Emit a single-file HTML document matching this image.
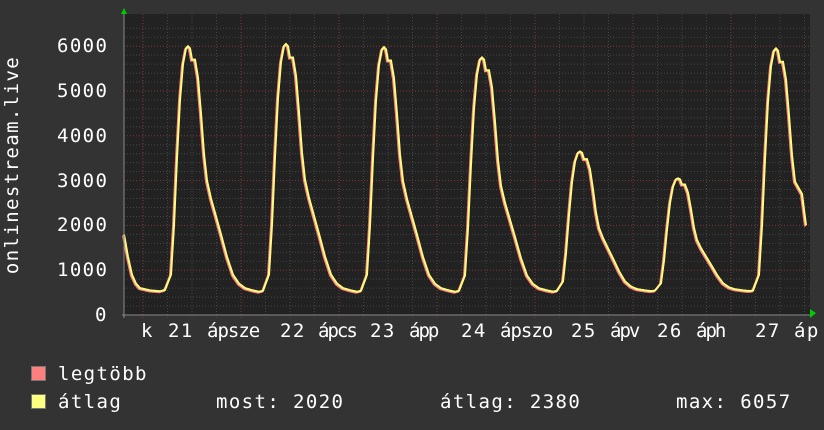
<!DOCTYPE html>
<html><head><meta charset="utf-8"><style>
html,body{margin:0;padding:0;background:#333;}
body{width:824px;height:430px;position:relative;overflow:hidden;font-family:"DejaVu Sans Mono","Liberation Mono",monospace;color:#fff;}
.t{position:absolute;font-size:19px;line-height:20px;white-space:pre;letter-spacing:1.4px;}
.x{position:absolute;font-size:19px;line-height:20px;white-space:pre;top:321px;letter-spacing:1.4px;}
.sq{position:absolute;width:13px;height:13px;border:1px solid #777;}
</style></head><body>
<svg id="g" width="824" height="430" style="position:absolute;left:0;top:0"></svg>
<div class="t" style="left:-108px;top:155px;transform:rotate(-90deg);transform-origin:center;width:240px;text-align:center;">onlinestream.live</div>
<div class="t" style="left:57px;top:36px">6000</div>
<div class="t" style="left:57px;top:81px">5000</div>
<div class="t" style="left:57px;top:126px">4000</div>
<div class="t" style="left:57px;top:171px">3000</div>
<div class="t" style="left:57px;top:215px">2000</div>
<div class="t" style="left:57px;top:260px">1000</div>
<div class="t" style="left:95px;top:305px">0</div>
<div class="x" style="left:141px">k</div>
<div class="x" style="left:168px">21</div>
<div class="x" style="left:207px;letter-spacing:-1px">ápsze</div>
<div class="x" style="left:280px">22</div>
<div class="x" style="left:318px;letter-spacing:-2px">ápcs</div>
<div class="x" style="left:370px">23</div>
<div class="x" style="left:409px;letter-spacing:-2px">ápp</div>
<div class="x" style="left:461px">24</div>
<div class="x" style="left:500px;letter-spacing:-1px">ápszo</div>
<div class="x" style="left:571px">25</div>
<div class="x" style="left:610px;letter-spacing:-2px">ápv</div>
<div class="x" style="left:657px">26</div>
<div class="x" style="left:696px;letter-spacing:-2px">áph</div>
<div class="x" style="left:755px">27</div>
<div class="x" style="left:794px">áp</div>
<div class="sq" style="left:31px;top:366px;background:#ff7f7f"></div>
<div class="sq" style="left:31px;top:394px;background:#ffff7f"></div>
<div class="t" style="left:58px;top:364px">legtöbb</div>
<div class="t" style="left:58px;top:392px">átlag</div>
<div class="t" style="left:216px;top:392px">most: 2020</div>
<div class="t" style="left:440px;top:392px">átlag: 2380</div>
<div class="t" style="left:676px;top:392px">max: 6057</div>
<script>
var s=document.getElementById('g'),h='';
h+='<rect x="124" y="14" width="686" height="301" fill="#222"/>';
for(var v=0;v<=6400;v+=200){var y=315-v*0.0448;var maj=v%1000==0;
h+='<line x1="124" x2="810" y1="'+y+'" y2="'+y+'" stroke="'+(maj?'#7a3a3a':'#444')+'" stroke-dasharray="1,2"/>';}
for(var x=143-98;x<810;x+=24.5){if(x<124)continue;var k=Math.round((x-143)/24.5);var maj=k%4==0;
h+='<line y1="14" y2="318" x1="'+x+'" x2="'+x+'" stroke="'+(maj?'#7a3a3a':'#444')+'" stroke-dasharray="1,2"/>';}
var peaks=[6000,6050,5980,5750,3650,3050,5950];
var shape=[[24,560],[28,900],[31,2000],[34,3500],[37,4800],[40,5600],[43,5950],[45,6000],[47,5950],[49,5700],[52,5700],[55,5300],[58,4500],[61,3600],[64,3000],[68,2600],[73,2200],[78,1800],[84,1300],[90,900],[96,700],[102,600],[110,550],[116,520],[120,540]];
var pts=[[124,1800],[128,1300],[132,900],[136,700],[140,600],[150,550],[160,530],[165,560]];
function yv(v){return 315-v*0.0448;}
for(var d=0;d<7;d++){var M=143+98*d,P=peaks[d];
for(var i=1;i<shape.length;i++){var o=shape[i][0],v=shape[i][1];
v=550+(v-550)*(P-550)/(6000-550);
if(M+o>798)break;pts.push([M+o,v]);}}
pts.push([802,2700],[806,2000]);
function path(dx,dy){return 'M'+pts.map(function(p){return (p[0]+dx)+','+(yv(p[1])+dy).toFixed(1)}).join(' L');}
h+='<path d="'+path(-1,1)+'" fill="none" stroke="#ff7f7f" stroke-width="2"/>';
h+='<path d="'+path(0,0)+'" fill="none" stroke="#ffff7f" stroke-width="2"/>';
h+='<path d="M122 315 H812" stroke="#888" stroke-width="1"/><path d="M124 12 V318" stroke="#888"/>';
h+='<polygon points="121,14 127,14 124,8" fill="#0c0"/><polygon points="810,309 810,318 816,313" fill="#0c0"/>';
s.innerHTML=h;
</script>
</body></html>
